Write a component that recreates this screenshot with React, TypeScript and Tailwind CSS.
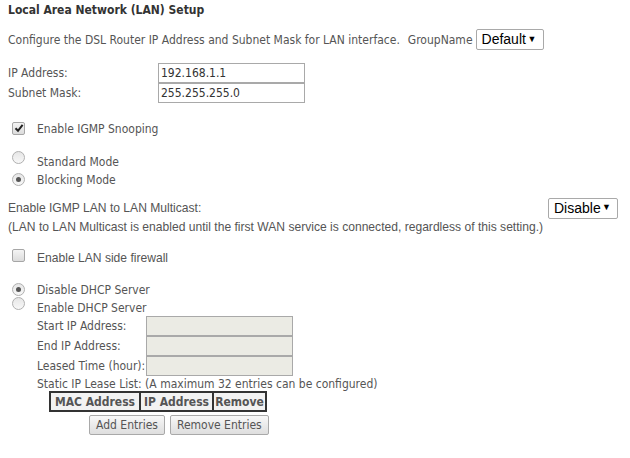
const body = "font-['DejaVu_Sans_Condensed','DejaVu_Sans',sans-serif] text-[12px] text-[#555]";
const narrow = "font-['Liberation_Sans',sans-serif] text-[13px] text-[#555]";

function Checkbox({ checked }: { checked?: boolean }) {
  return (
    <span className="relative inline-flex h-[13px] w-[13px] items-center justify-center rounded-[2px] border border-[#a6a6a6] bg-gradient-to-b from-[#f4f4f4] to-[#dcdcdc]">
      {checked && (
        <svg width="10" height="10" viewBox="0 0 10 10">
          <path d="M1.5 5.2 L4 7.8 L8.6 1.8" fill="none" stroke="#222" strokeWidth="2" />
        </svg>
      )}
    </span>
  );
}

function Radio({ checked }: { checked?: boolean }) {
  return (
    <span className="inline-flex h-[13px] w-[13px] items-center justify-center rounded-full border border-[#b0b0b0] bg-gradient-to-b from-[#e6e6e6] to-[#f8f8f8]">
      {checked && <span className="h-[5px] w-[5px] rounded-full bg-[#555]" />}
    </span>
  );
}

function Select({ value, className }: { value: string; className: string }) {
  return (
    <span
      className={`inline-flex items-center justify-between rounded-[2px] border border-[#a9a9a9] bg-white pl-[5px] pr-[6px] font-['Liberation_Sans',sans-serif] text-[14px] text-black ${className}`}
    >
      {value}
      <span className="text-[9px]">▼</span>
    </span>
  );
}

function Field({ value, disabled, width }: { value?: string; disabled?: boolean; width: string }) {
  return (
    <span
      className={`flex h-[20px] items-center border border-[#a9a9a9] px-[2px] text-[#333] ${width} ${
        disabled ? "bg-[#ebebe4]" : "bg-white"
      }`}
    >
      {value}
    </span>
  );
}

function Btn({ label }: { label: string }) {
  return (
    <button className="h-[20px] rounded-[2px] border border-[#a9a9a9] bg-gradient-to-b from-[#f8f8f8] to-[#dedede] px-[6px] text-[#555]">
      {label}
    </button>
  );
}

function Narrow({ children }: { children: React.ReactNode }) {
  return <span className="inline-block origin-left scale-x-[0.93] whitespace-nowrap">{children}</span>;
}

export default function App() {
  return (
    <div className={`min-h-screen w-[630px] bg-white pl-[8px] ${body}`}>
      <div className="flex h-[20px] items-center font-bold text-[#333]">Local Area Network (LAN) Setup</div>

      <div className="mt-[9px] flex h-[21px] items-center">
        <span>Configure the DSL Router IP Address and Subnet Mask for LAN interface.</span>
        <span className="ml-[8px]">GroupName</span>
        <Select value="Default" className="ml-[3px] h-[21px] w-[68px]" />
      </div>

      <div className="mt-[13px] flex flex-col">
        <div className="flex h-[20px] items-center">
          <span className="w-[150px]">IP Address:</span>
          <Field value="192.168.1.1" width="w-[147px]" />
        </div>
        <div className="flex h-[20px] items-center">
          <span className="w-[150px]">Subnet Mask:</span>
          <Field value="255.255.255.0" width="w-[147px]" />
        </div>
      </div>

      <div className="mt-[16px] flex h-[20px] items-center">
        <span className="ml-[4px]"><Checkbox checked /></span>
        <span className="ml-[12px]">Enable IGMP Snooping</span>
      </div>

      <div className="mt-[12px] flex flex-col">
        <div className="flex h-[18px] items-center">
          <span className="ml-[4px]"><Radio /></span>
          <span className="ml-[12px] mt-[3px]">Standard Mode</span>
        </div>
        <div className="flex h-[18px] items-center">
          <span className="ml-[4px]"><Radio checked /></span>
          <span className="ml-[12px] mt-[3px]">Blocking Mode</span>
        </div>
      </div>

      <div className={`mt-[11px] flex flex-col ${narrow}`}>
        <div className="flex h-[20px] items-center justify-between pr-[12px]">
          <Narrow>Enable IGMP LAN to LAN Multicast:</Narrow>
          <Select value="Disable" className="h-[21px] w-[70px]" />
        </div>
        <div className="flex h-[18px] items-center">
          <Narrow>
            (LAN to LAN Multicast is enabled until the first WAN service is connected, regardless of this setting.)
          </Narrow>
        </div>
        <div className="mt-[12px] flex h-[20px] items-center">
          <span className="ml-[4px]"><Checkbox /></span>
          <span className="ml-[12px]">
            <Narrow>Enable LAN side firewall</Narrow>
          </span>
        </div>
      </div>

      <div className="mt-[12px] flex flex-col">
        <div className="flex h-[18px] items-center">
          <span className="ml-[4px] -mt-[3px]"><Radio checked /></span>
          <span className="ml-[12px] mt-[2px]">Disable DHCP Server</span>
        </div>
        <div className="flex h-[18px] items-center">
          <span className="ml-[4px] -mt-[3px]"><Radio /></span>
          <span className="ml-[12px] mt-[2px]">Enable DHCP Server</span>
        </div>
      </div>

      <div className="ml-[29px] flex flex-col">
        <div className="flex h-[20px] items-center">
          <span className="w-[109px]">Start IP Address:</span>
          <Field disabled width="w-[147px]" />
        </div>
        <div className="flex h-[20px] items-center">
          <span className="w-[109px]">End IP Address:</span>
          <Field disabled width="w-[147px]" />
        </div>
        <div className="flex h-[20px] items-center">
          <span className="w-[109px]">Leased Time (hour):</span>
          <Field disabled width="w-[147px]" />
        </div>
        <div className="flex h-[15px] items-center">Static IP Lease List: (A maximum 32 entries can be configured)</div>

        <div className="ml-[12px] flex h-[21px] w-[218px] self-start border-2 border-[#333] bg-[#f2f2f2] font-bold">
          <span className="flex w-[88px] items-center justify-center">MAC Address</span>
          <span className="flex w-[73px] items-center justify-center border-l-2 border-[#333]">IP Address</span>
          <span className="flex flex-1 items-center justify-center border-l-2 border-[#333]">Remove</span>
        </div>

        <div className="ml-[52px] mt-[3px] flex gap-[5px]">
          <Btn label="Add Entries" />
          <Btn label="Remove Entries" />
        </div>
      </div>
    </div>
  );
}
